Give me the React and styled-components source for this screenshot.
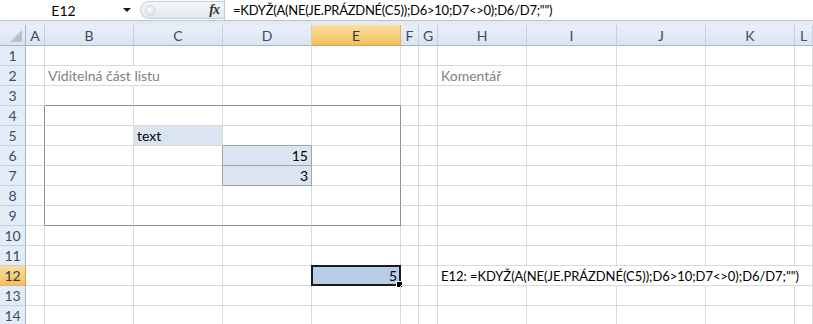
import React from "react";
import styled, { createGlobalStyle } from "styled-components";

const GlobalStyle = createGlobalStyle`
  html, body {
    margin: 0;
    padding: 0;
    background: #ffffff;
  }
  body {
    font-family: Lato, "Liberation Sans", sans-serif;
    overflow: hidden;
  }
`;

const GRID = "#d9d9d9";
const BOX = "#8e8e8e";
const THIN = "#a3a3a3";
const HEAD_LINE = "#9eb6ce";

const COLS = [
  { id: "A", w: "19px" },
  { id: "B", w: "89px" },
  { id: "C", w: "89px" },
  { id: "D", w: "89px" },
  { id: "E", w: "89px" },
  { id: "F", w: "18px" },
  { id: "G", w: "19px" },
  { id: "H", w: "89px" },
  { id: "I", w: "90px" },
  { id: "J", w: "89px" },
  { id: "K", w: "89px" },
  { id: "L", w: "1fr" },
];
const ROW_COUNT = 14;
const ACTIVE_COL = "E";
const ACTIVE_ROW = 12;
const FORMULA = '=KDYŽ(A(NE(JE.PRÁZDNÉ(C5));D6>10;D7<>0);D6/D7;"")';

const cells = {
  B2: { text: "Viditelná část listu", muted: true },
  H2: { text: "Komentář", muted: true },
  C5: { text: "text", fill: "#dbe5f1" },
  D6: { text: "15", fill: "#dbe5f1", right: true },
  D7: { text: "3", fill: "#dbe5f1", right: true },
  E12: { text: "5", fill: "#b9cde5", right: true },
  H12: { text: "E12: " + FORMULA, formula: true },
};

// borders on the right / bottom edge of each cell (c = column index, A = 0)
const rightColor = (r, c) => {
  if (r >= 4 && r <= 9 && (c === 0 || c === 4)) return BOX;
  if ((r === 6 || r === 7) && (c === 2 || c === 3)) return THIN;
  if (r === 2 && c === 1) return "transparent";
  if (r === 12 && c >= 7 && c <= 10) return "transparent";
  return GRID;
};
const bottomColor = (r, c) => {
  if ((r === 3 || r === 9) && c >= 1 && c <= 4) return BOX;
  if (r >= 5 && r <= 7 && c === 3) return THIN;
  return GRID;
};

const Window = styled.div`
  width: 813px;
  height: 324px;
  overflow: hidden;
  background: #ffffff;
`;

const FormulaBar = styled.div`
  display: flex;
  align-items: stretch;
  height: 20px;
  border-bottom: 1px solid #b7c3d2;
  background: #ffffff;
`;

const NameBox = styled.div`
  width: 140px;
  display: flex;
  align-items: center;
  font-size: 14px;
  color: #000;
`;

const NameText = styled.span`
  flex: 1;
  text-align: center;
  padding-left: 4px;
`;

const DropArrow = styled.span`
  width: 0;
  height: 0;
  margin-right: 9px;
  border-left: 4px solid transparent;
  border-right: 4px solid transparent;
  border-top: 4px solid #1a1a1a;
`;

const FxPanel = styled.div`
  width: 84px;
  display: flex;
  align-items: center;
  justify-content: space-between;
  box-sizing: border-box;
  margin: 1px 0;
  padding: 0 5px 0 4px;
  border: 1px solid #c3ccd8;
  border-right: none;
  border-radius: 10px 0 0 10px;
  background: linear-gradient(#f5f7fa, #e2e7ee);
`;

const Grip = styled.span`
  width: 9px;
  height: 9px;
  border-radius: 50%;
  background: radial-gradient(circle at 40% 35%, #ffffff, #c9d1dc);
  border: 1px solid #d5dbe3;
`;

const FxLabel = styled.span`
  font-family: "Liberation Serif", serif;
  font-style: italic;
  font-weight: bold;
  font-size: 14px;
  color: #333;
  letter-spacing: -1px;
`;

const FormulaInput = styled.div`
  flex: 1;
  display: flex;
  align-items: center;
  padding-left: 8px;
  font-size: 13px;
  letter-spacing: -0.25px;
  color: #000;
  border-left: 1px solid #c3ccd8;
  white-space: pre;
`;

const Strip = styled.div`
  height: 4px;
  background: #e4eaf2;
`;

const Sheet = styled.div`
  display: grid;
  grid-template-columns: 26px ${COLS.map((c) => c.w).join(" ")};
  grid-template-rows: 21px repeat(${ROW_COUNT}, 20px);
`;

const headerBg = (sel) =>
  sel
    ? "linear-gradient(#f9dea3, #f1c15f)"
    : "linear-gradient(#eaf0f8, #dbe4f1)";

const Corner = styled.div`
  box-sizing: border-box;
  background: ${headerBg(false)};
  border-right: 1px solid ${HEAD_LINE};
  border-bottom: 1px solid ${HEAD_LINE};
  display: flex;
  align-items: flex-end;
  justify-content: flex-end;
  padding: 0 3px 3px 0;
`;

const ColHeader = styled.div`
  box-sizing: border-box;
  display: flex;
  align-items: center;
  justify-content: center;
  font-size: 14px;
  color: ${(p) => (p.$selected ? "#3a3a3a" : "#3a4c66")};
  background: ${(p) => headerBg(p.$selected)};
  border-right: 1px solid ${(p) => (p.$selected ? "#f0b34a" : "#c3d0e0")};
  border-bottom: 1px solid ${(p) => (p.$selected ? "#e3a12f" : HEAD_LINE)};
`;

const RowHeader = styled.div`
  box-sizing: border-box;
  display: flex;
  align-items: center;
  justify-content: center;
  font-size: 14px;
  color: ${(p) => (p.$selected ? "#3a3a3a" : "#3a4c66")};
  background: ${(p) => (p.$selected ? headerBg(true) : "#e4ecf7")};
  border-right: 1px solid ${(p) => (p.$selected ? "#e3a12f" : HEAD_LINE)};
  border-bottom: 1px solid ${(p) => (p.$selected ? "#f0b34a" : "#c3d0e0")};
`;

const Cell = styled.div`
  position: relative;
  box-sizing: border-box;
  display: flex;
  align-items: center;
  justify-content: ${(p) => (p.$right ? "flex-end" : "flex-start")};
  padding: 0 3px;
  min-width: 0;
  white-space: nowrap;
  font-size: ${(p) => (p.$formula ? "13px" : "14px")};
  letter-spacing: ${(p) => (p.$formula ? "-0.05px" : "normal")};
  color: ${(p) => (p.$muted ? "#7f7f7f" : "#000000")};
  background: ${(p) => p.$fill || "transparent"};
  border-right: 1px solid ${(p) => p.$rightLine};
  border-bottom: 1px solid ${(p) => p.$bottomLine};
`;

const Selection = styled.div`
  position: absolute;
  top: -1px;
  left: -1px;
  right: -1px;
  bottom: -1px;
  border: 2px solid #1b1b1b;
  pointer-events: none;
`;

const FillHandle = styled.span`
  position: absolute;
  right: -4px;
  bottom: -4px;
  width: 5px;
  height: 5px;
  background: #000;
  border: 1px solid #fff;
`;

const CornerTriangle = () => (
  <svg width="12" height="12" viewBox="0 0 12 12">
    <polygon points="12,0 12,12 0,12" fill="#b7c2d0" />
  </svg>
);

export default function App() {
  const rows = Array.from({ length: ROW_COUNT }, (_, i) => i + 1);
  return (
    <Window>
      <GlobalStyle />
      <FormulaBar>
        <NameBox>
          <NameText>E12</NameText>
          <DropArrow />
        </NameBox>
        <FxPanel>
          <Grip />
          <FxLabel>fx</FxLabel>
        </FxPanel>
        <FormulaInput>{FORMULA}</FormulaInput>
      </FormulaBar>
      <Strip />
      <Sheet>
        <Corner>
          <CornerTriangle />
        </Corner>
        {COLS.map((c) => (
          <ColHeader key={c.id} $selected={c.id === ACTIVE_COL}>
            {c.id}
          </ColHeader>
        ))}
        {rows.map((r) => (
          <React.Fragment key={r}>
            <RowHeader $selected={r === ACTIVE_ROW}>{r}</RowHeader>
            {COLS.map((c, ci) => {
              const key = c.id + r;
              const data = cells[key] || {};
              const active = c.id === ACTIVE_COL && r === ACTIVE_ROW;
              return (
                <Cell
                  key={key}
                  $fill={data.fill}
                  $right={data.right}
                  $muted={data.muted}
                  $formula={data.formula}
                  $rightLine={rightColor(r, ci)}
                  $bottomLine={bottomColor(r, ci)}
                >
                  {data.text}
                  {active && (
                    <Selection>
                      <FillHandle />
                    </Selection>
                  )}
                </Cell>
              );
            })}
          </React.Fragment>
        ))}
      </Sheet>
    </Window>
  );
}
